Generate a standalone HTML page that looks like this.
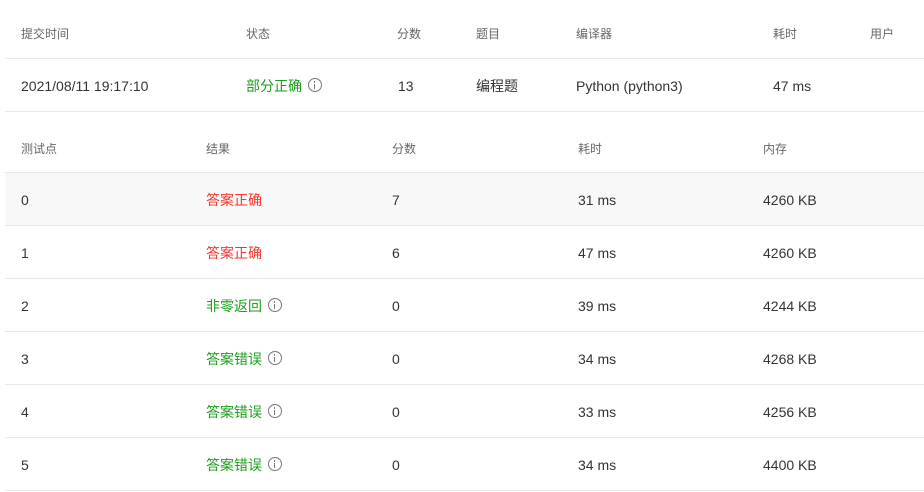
<!DOCTYPE html>
<html><head><meta charset="utf-8"><style>
body{margin:0;width:924px;height:492px;background:#fff;font-family:"Liberation Sans","Noto Sans CJK SC",sans-serif;font-size:14px;color:#333;position:relative;overflow:hidden}
.t{position:absolute;white-space:nowrap;line-height:16px}
.h{color:#666;font-size:12px}
.line{position:absolute;left:5px;right:0;height:1px;background:#e8e8e8}
.bg{position:absolute;left:5px;right:0;background:#f8f8f8}
.g{color:#1a9f1a}.r{color:#f5342e}
.i{display:inline-block;width:14px;height:14px;border:1.4px solid #777;border-radius:50%;box-sizing:border-box;vertical-align:-1px;margin-left:6px;position:relative}
.i:before{content:"";position:absolute;left:4.6px;top:2px;width:1.8px;height:1.8px;background:#777}
.i:after{content:"";position:absolute;left:4.6px;top:4.8px;width:1.8px;height:5px;background:#777}
</style></head><body>
<div class="t h" style="left:21px;top:26px">提交时间</div>
<div class="t h" style="left:246px;top:26px">状态</div>
<div class="t h" style="left:397px;top:26px">分数</div>
<div class="t h" style="left:476px;top:26px">题目</div>
<div class="t h" style="left:576px;top:26px">编译器</div>
<div class="t h" style="left:773px;top:26px">耗时</div>
<div class="t h" style="left:870px;top:26px">用户</div>
<div class="line" style="top:58px"></div>
<div class="t" style="left:21px;top:78px">2021/08/11 19:17:10</div>
<div class="t g" style="left:246px;top:78px">部分正确<span class="i"></span></div>
<div class="t" style="left:398px;top:78px">13</div>
<div class="t" style="left:476px;top:78px">编程题</div>
<div class="t" style="left:576px;top:78px">Python (python3)</div>
<div class="t" style="left:773px;top:78px">47 ms</div>
<div class="line" style="top:111px"></div>

<div class="t h" style="left:21px;top:141px">测试点</div>
<div class="t h" style="left:206px;top:141px">结果</div>
<div class="t h" style="left:392px;top:141px">分数</div>
<div class="t h" style="left:578px;top:141px">耗时</div>
<div class="t h" style="left:763px;top:141px">内存</div>
<div class="line" style="top:172px"></div>
<div class="bg" style="top:173px;height:52px"></div>

<div class="t" style="left:21px;top:192px">0</div><div class="t r" style="left:206px;top:192px">答案正确</div><div class="t" style="left:392px;top:192px">7</div><div class="t" style="left:578px;top:192px">31 ms</div><div class="t" style="left:763px;top:192px">4260 KB</div>
<div class="line" style="top:225px"></div>
<div class="t" style="left:21px;top:245px">1</div><div class="t r" style="left:206px;top:245px">答案正确</div><div class="t" style="left:392px;top:245px">6</div><div class="t" style="left:578px;top:245px">47 ms</div><div class="t" style="left:763px;top:245px">4260 KB</div>
<div class="line" style="top:278px"></div>
<div class="t" style="left:21px;top:298px">2</div><div class="t g" style="left:206px;top:298px">非零返回<span class="i"></span></div><div class="t" style="left:392px;top:298px">0</div><div class="t" style="left:578px;top:298px">39 ms</div><div class="t" style="left:763px;top:298px">4244 KB</div>
<div class="line" style="top:331px"></div>
<div class="t" style="left:21px;top:351px">3</div><div class="t g" style="left:206px;top:351px">答案错误<span class="i"></span></div><div class="t" style="left:392px;top:351px">0</div><div class="t" style="left:578px;top:351px">34 ms</div><div class="t" style="left:763px;top:351px">4268 KB</div>
<div class="line" style="top:384px"></div>
<div class="t" style="left:21px;top:404px">4</div><div class="t g" style="left:206px;top:404px">答案错误<span class="i"></span></div><div class="t" style="left:392px;top:404px">0</div><div class="t" style="left:578px;top:404px">33 ms</div><div class="t" style="left:763px;top:404px">4256 KB</div>
<div class="line" style="top:437px"></div>
<div class="t" style="left:21px;top:457px">5</div><div class="t g" style="left:206px;top:457px">答案错误<span class="i"></span></div><div class="t" style="left:392px;top:457px">0</div><div class="t" style="left:578px;top:457px">34 ms</div><div class="t" style="left:763px;top:457px">4400 KB</div>
<div class="line" style="top:490px"></div>
</body></html>
